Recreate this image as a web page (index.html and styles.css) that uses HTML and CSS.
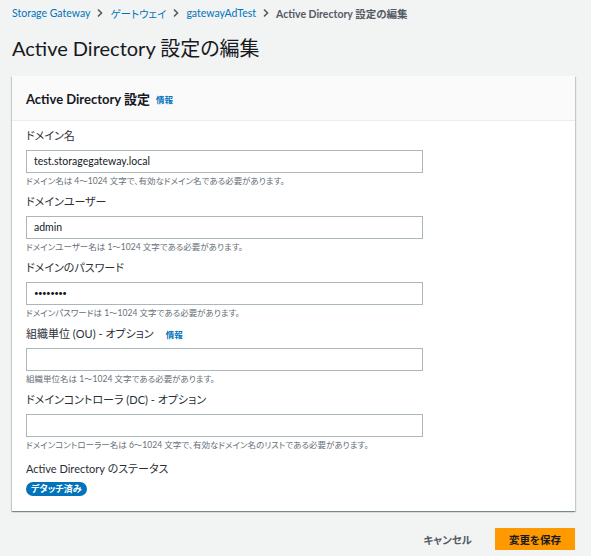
FILE: index.html
```html
<!DOCTYPE html>
<html lang="ja">
<head>
<meta charset="utf-8">
<link rel="stylesheet" href="styles.css">
</head>
<body>
<div class="page">
  <nav class="crumbs">
    <a class="crumb-link">Storage Gateway</a>
    <svg class="chev" viewBox="0 0 8 10" width="8" height="10"><path d="M2 1.5 L5.5 5 L2 8.5" fill="none" stroke="#545b64" stroke-width="1.6"/></svg>
    <a class="crumb-link">ゲートウェイ</a>
    <svg class="chev" viewBox="0 0 8 10" width="8" height="10"><path d="M2 1.5 L5.5 5 L2 8.5" fill="none" stroke="#545b64" stroke-width="1.6"/></svg>
    <a class="crumb-link">gatewayAdTest</a>
    <svg class="chev" viewBox="0 0 8 10" width="8" height="10"><path d="M2 1.5 L5.5 5 L2 8.5" fill="none" stroke="#545b64" stroke-width="1.6"/></svg>
    <span class="crumb-current">Active Directory 設定の編集</span>
  </nav>
  <h1 class="title">Active Directory 設定の編集</h1>
  <section class="card">
    <header class="card-head">
      <h2 class="card-title">Active Directory 設定</h2>
      <a class="info">情報</a>
    </header>
    <div class="card-body">
      <div class="field">
        <label class="label">ドメイン名</label>
        <div class="input">test.storagegateway.local</div>
        <div class="hint">ドメイン名は 4～1024 文字で、有効なドメイン名である必要があります。</div>
      </div>
      <div class="field">
        <label class="label">ドメインユーザー</label>
        <div class="input">admin</div>
        <div class="hint">ドメインユーザー名は 1～1024 文字である必要があります。</div>
      </div>
      <div class="field">
        <label class="label">ドメインのパスワード</label>
        <div class="input pw">••••••••</div>
        <div class="hint">ドメインパスワードは 1～1024 文字である必要があります。</div>
      </div>
      <div class="field">
        <label class="label">組織単位 (OU) - オプション<a class="info info-label">情報</a></label>
        <div class="input"></div>
        <div class="hint">組織単位名は 1～1024 文字である必要があります。</div>
      </div>
      <div class="field">
        <label class="label">ドメインコントローラ (DC) - オプション</label>
        <div class="input"></div>
        <div class="hint">ドメインコントローラー名は 6～1024 文字で、有効なドメイン名のリストである必要があります。</div>
      </div>
      <div class="status">
        <div class="label">Active Directory のステータス</div>
        <span class="badge">デタッチ済み</span>
      </div>
    </div>
  </section>
  <div class="actions">
    <button class="btn-cancel">キャンセル</button>
    <button class="btn-primary">変更を保存</button>
  </div>
</div>
</body>
</html>
```

FILE: styles.css
```css
* { box-sizing: border-box; }
html, body { margin: 0; padding: 0; }
body {
  background: #f2f3f3;
  font-family: "Lato", "Noto Sans CJK JP", sans-serif;
  font-feature-settings: "palt";
  color: #16191f;
  width: 591px;
  height: 556px;
  overflow: hidden;
}
.page {
  padding: 0 16px 0 12px;
}
.crumbs {
  display: flex;
  align-items: center;
  gap: 6px;
  height: 26px;
  font-size: 10.5px;
}
.crumb-link { color: #0073bb; }
.crumb-current { color: #545b64; font-weight: bold; }
.chev { flex: none; }
.title {
  margin: 9px 0 0 0;
  font-size: 20px;
  line-height: 26px;
  font-weight: normal;
  color: #16191f;
}
.card {
  margin-top: 15px;
  background: #fff;
  box-shadow: 0 1px 1px 0 rgba(0,28,36,0.3), 1px 1px 1px 0 rgba(0,28,36,0.15), -1px 1px 1px 0 rgba(0,28,36,0.15);
}
.card-head {
  display: flex;
  align-items: center;
  gap: 6px;
  height: 45px;
  padding: 0 14px;
  background: #fafafa;
  border-bottom: 1px solid #eaeded;
}
.card-title {
  margin: 0;
  font-size: 13px;
  font-weight: bold;
  color: #16191f;
}
.info {
  color: #0073bb;
  font-size: 8.5px;
  font-weight: bold;
  padding-top: 1px;
}
.info-label { margin-left: 12px; }
.card-body {
  padding: 7px 14px 15px 14px;
  display: flex;
  flex-direction: column;
}
.field {
  display: flex;
  flex-direction: column;
  width: 397px;
  margin-bottom: 6px;
}
.label {
  display: flex;
  align-items: center;
  height: 16px;
  font-size: 11px;
  line-height: 16px;
  color: #2a2f36;
  margin-bottom: 6px;
}
.input {
  height: 23px;
  border: 1px solid #aab7b8;
  background: #fff;
  padding: 0 7px;
  font-size: 10.5px;
  line-height: 21px;
  color: #16191f;
}
.pw { font-size: 8px; letter-spacing: -0.6px; }
.hint {
  margin-top: 1px;
  font-size: 8.5px;
  line-height: 14px;
  color: #687078;
  white-space: nowrap;
}
.status {
  display: flex;
  flex-direction: column;
  align-items: flex-start;
  margin-top: 3px;
}
.status .label { margin-bottom: 5px; }
.badge {
  display: block;
  background: #0073bb;
  color: #fff;
  font-size: 9px;
  font-weight: bold;
  line-height: 14px;
  height: 14px;
  padding: 0 5px;
  border-radius: 7px;
}
.actions {
  display: flex;
  justify-content: flex-end;
  align-items: center;
  gap: 23px;
  margin-top: 17px;
}
button { font-family: inherit; font-feature-settings: "palt"; cursor: pointer; }
.btn-cancel {
  background: none;
  border: none;
  padding: 0;
  font-size: 10.5px;
  font-weight: bold;
  color: #545b64;
}
.btn-primary {
  width: 80px;
  height: 22px;
  background: #ff9900;
  border: none;
  border-radius: 0;
  font-size: 10.5px;
  font-weight: bold;
  color: #16191f;
  padding: 0;
}
```
